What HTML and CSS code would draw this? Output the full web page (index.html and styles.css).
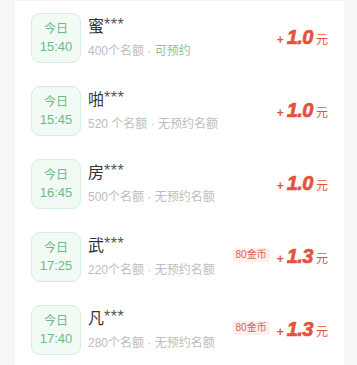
FILE: index.html
```html
<!DOCTYPE html>
<html lang="zh">
<head>
<meta charset="utf-8">
<link rel="stylesheet" href="styles.css">
</head>
<body>
<div class="list">
  <div class="row">
    <div class="date"><span>今日</span><span class="time">15:40</span></div>
    <div class="info">
      <div class="name">蜜<span class="stars">***</span></div>
      <div class="sub">400个名额 · <span class="ok">可预约</span></div>
    </div>
    <div class="price"><span class="plus">+</span><span class="num">1.0</span><span class="yuan">元</span></div>
  </div>
  <div class="row">
    <div class="date"><span>今日</span><span class="time">15:45</span></div>
    <div class="info">
      <div class="name">啪<span class="stars">***</span></div>
      <div class="sub">520 个名额 · 无预约名额</div>
    </div>
    <div class="price"><span class="plus">+</span><span class="num">1.0</span><span class="yuan">元</span></div>
  </div>
  <div class="row">
    <div class="date"><span>今日</span><span class="time">16:45</span></div>
    <div class="info">
      <div class="name">房<span class="stars">***</span></div>
      <div class="sub">500个名额 · 无预约名额</div>
    </div>
    <div class="price"><span class="plus">+</span><span class="num">1.0</span><span class="yuan">元</span></div>
  </div>
  <div class="row">
    <div class="date"><span>今日</span><span class="time">17:25</span></div>
    <div class="info">
      <div class="name">武<span class="stars">***</span></div>
      <div class="sub">220个名额 · 无预约名额</div>
    </div>
    <div class="price"><span class="coin">80金币</span><span class="plus">+</span><span class="num">1.3</span><span class="yuan">元</span></div>
  </div>
  <div class="row">
    <div class="date"><span>今日</span><span class="time">17:40</span></div>
    <div class="info">
      <div class="name">凡<span class="stars">***</span></div>
      <div class="sub">280个名额 · 无预约名额</div>
    </div>
    <div class="price"><span class="coin">80金币</span><span class="plus">+</span><span class="num">1.3</span><span class="yuan">元</span></div>
  </div>
</div>
</body>
</html>
```
FILE: styles.css
```css
html, body {
  margin: 0;
  padding: 0;
  background: #f6f6f6;
  font-family: "Liberation Sans", "Noto Sans CJK SC", sans-serif;
}
.list {
  margin: 0 13px 0 15px;
  background: #ffffff;
  min-height: 365px;
}
.row {
  display: flex;
  align-items: center;
  height: 73px;
  padding: 0 16px;
  box-sizing: border-box;
}
.row:first-child {
  margin-top: 1px;
}
.date {
  width: 50px;
  height: 50px;
  box-sizing: border-box;
  border: 1px solid #d6eedd;
  background: #f1faf4;
  border-radius: 9px;
  display: flex;
  flex-direction: column;
  align-items: center;
  justify-content: center;
  color: #6fb986;
  font-size: 12px;
  line-height: 18px;
  flex-shrink: 0;
}
.time {
  font-size: 13px;
}
.info {
  flex: 1;
  margin-left: 7px;
  display: flex;
  flex-direction: column;
  height: 50px;
}
.name {
  font-size: 16px;
  color: #333333;
  line-height: 22px;
  margin-top: 1px;
}
.stars {
  font-size: 16px;
  color: #555;
  letter-spacing: 0.5px;
  vertical-align: 2px;
}
.sub {
  font-size: 12px;
  color: #bdbdbd;
  line-height: 16px;
  margin-top: 5px;
}
.ok {
  color: #86c59a;
}
.price {
  display: flex;
  align-items: baseline;
  color: #e2533d;
}
.coin {
  font-size: 10px;
  color: #d9654f;
  background: #fdefec;
  border-radius: 3px;
  padding: 1px 3px;
  line-height: 12px;
  margin-right: 7px;
  align-self: center;
  margin-top: -4px;
}
.plus {
  font-size: 12px;
  font-weight: bold;
  margin-right: 3px;
}
.num {
  font-size: 20px;
  font-weight: bold;
  font-style: italic;
  font-family: "Liberation Sans", sans-serif;
  letter-spacing: -0.5px;
  margin-right: 3px;
  -webkit-text-stroke: 0.7px #e2533d;
}
.yuan {
  font-size: 12px;
  font-family: "Noto Sans CJK SC", sans-serif;
}
```
